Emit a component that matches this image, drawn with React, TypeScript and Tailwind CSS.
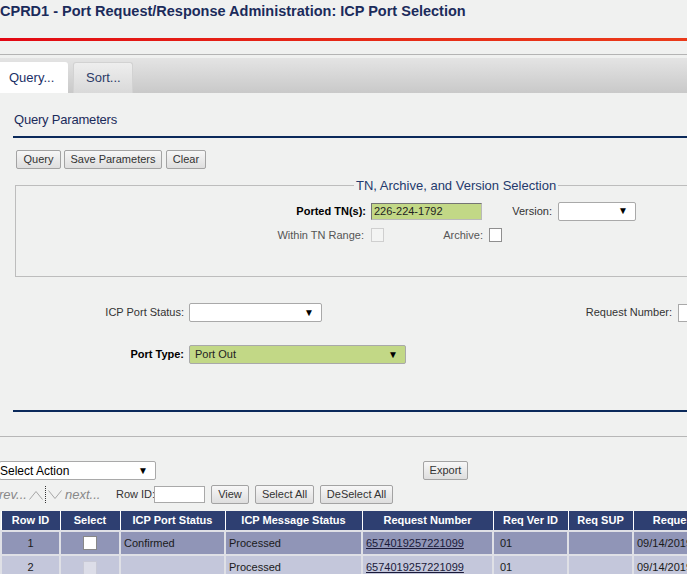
import React from "react";

const Btn = ({ children, className = "" }: { children: React.ReactNode; className?: string }) => (
  <div
    className={
      "h-[19px] flex items-center justify-center rounded-[2px] border border-[#a3a3a3] bg-gradient-to-b from-[#f7f7f7] to-[#dedede] text-[11px] text-[#333] whitespace-nowrap " +
      className
    }
  >
    {children}
  </div>
);

const Select = ({
  value = "",
  className = "",
  pad = "pl-[5px]",
}: {
  value?: string;
  className?: string;
  pad?: string;
}) => (
  <div
    className={
      "h-[19px] flex items-center justify-between rounded-[2px] border border-[#a9a9a9] pr-[7px] text-[#222] " +
      pad +
      " " +
      className
    }
  >
    <span className="whitespace-nowrap">{value}</span>
    <span className="text-[10px] leading-none text-black">▼</span>
  </div>
);

const Chevron = ({ up }: { up?: boolean }) => (
  <svg width="14" height="10" viewBox="0 0 14 10" className="block">
    <polyline
      points={up ? "0.5,9.5 7,1.5 13.5,9.5" : "0.5,0.5 7,8.5 13.5,0.5"}
      fill="none"
      stroke="#a6a6a6"
      strokeWidth="1"
    />
  </svg>
);

const cols = [59, 60, 105, 137, 131, 75, 65, 110];
const headers = [
  "Row ID",
  "Select",
  "ICP Port Status",
  "ICP Message Status",
  "Request Number",
  "Req Ver ID",
  "Req SUP",
  "Request Date",
];

const rows = [
  { id: "1", status: "Confirmed", msg: "Processed", req: "6574019257221099", ver: "01", sup: "", date: "09/14/2019", enabled: true },
  { id: "2", status: "", msg: "Processed", req: "6574019257221099", ver: "01", sup: "", date: "09/14/2019", enabled: false },
];

export default function App() {
  return (
    <div className="w-full h-[574px] overflow-hidden bg-[#f0f1f0] font-['Liberation_Sans',Arial,sans-serif] text-[#333]">
      {/* page title */}
      <div className="h-[38px] pt-[2px] text-[14.5px] font-bold leading-[18px] text-[#1b2b5b] whitespace-nowrap">
        CPRD1 - Port Request/Response Administration: ICP Port Selection
      </div>
      <div className="h-[3px] bg-gradient-to-r from-[#e20613] to-[#ea3a1a]" />
      <div className="mt-[13px] h-px bg-[#b4b4b4]" />

      {/* tabs */}
      <div className="mt-[3px] h-[35px] flex items-end bg-gradient-to-b from-[#e4e4e4] to-[#c9c9c9]">
        <div className="w-[68px] h-[31px] bg-white rounded-tr-[3px] flex items-center pl-[9px] text-[13px] text-[#1a2f66]">
          Query...
        </div>
        <div className="ml-[5px] w-[60px] h-[31px] rounded-t-[3px] border border-b-0 border-[#d2d2d2] bg-gradient-to-b from-[#eeeeee] to-[#d9d9d9] flex items-center pl-[12px] text-[13px] text-[#2b3a66]">
          Sort...
        </div>
      </div>

      {/* query parameters */}
      <div className="mt-[19px] ml-[14px] text-[13px] leading-[16px] tracking-[-0.2px] text-[#1b2b5b]">
        Query Parameters
      </div>
      <div className="mt-[8px] ml-[13px] h-[2px] bg-[#0b2a5b]" />

      <div className="mt-[12px] ml-[16px] flex">
        <Btn className="w-[45px]">Query</Btn>
        <Btn className="w-[98px] ml-[3px]">Save Parameters</Btn>
        <Btn className="w-[40px] ml-[4px]">Clear</Btn>
      </div>

      <fieldset className="mt-[9px] ml-[15px] w-[900px] border border-[#bdbdbd] pb-[34px]">
        <legend className="ml-[338px] px-[2px] text-[13px] leading-[15px] text-[#243a6d]">
          TN, Archive, and Version Selection
        </legend>
        <div className="mt-[8px] h-[20px] flex items-center text-[11px]">
          <div className="w-[350px] text-right font-bold text-black">Ported TN(s):</div>
          <div className="ml-[5px] w-[111px] h-[17px] flex items-center pl-[2px] bg-[#c2d886] border border-[#b9b9b9] border-t-[#747474] border-l-[#747474] text-[#222]">
            226-224-1792
          </div>
          <div className="w-[70px] text-right">Version:</div>
          <Select className="ml-[6px] w-[78px] bg-white text-[11px]" />
        </div>
        <div className="mt-[7px] h-[14px] flex items-center text-[11px]">
          <div className="w-[348px] text-right text-[#555]">Within TN Range:</div>
          <div className="ml-[7px] w-[13px] h-[14px] border border-[#cfcfcf] bg-[#f3f4f3]" />
          <div className="w-[99px] text-right text-[#555]">Archive:</div>
          <div className="ml-[6px] w-[13px] h-[14px] border border-[#8f8f8f] bg-white" />
        </div>
      </fieldset>

      <div className="mt-[26px] h-[19px] flex items-center text-[11px] w-[900px]">
        <div className="w-[184px] text-right">ICP Port Status:</div>
        <Select className="ml-[5px] w-[133px] bg-white" />
        <div className="w-[350px] text-right">Request Number:</div>
        <div className="ml-[6px] w-[60px] h-[18px] border border-[#a9a9a9] bg-white" />
      </div>

      <div className="mt-[23px] h-[19px] flex items-center text-[11px]">
        <div className="w-[184px] text-right font-bold text-black">Port Type:</div>
        <Select value="Port Out" className="ml-[5px] w-[217px] bg-[#c2d886]" />
      </div>

      <div className="mt-[46px] ml-[13px] h-[2px] bg-[#0b2a5b]" />
      <div className="mt-[24px] h-px bg-[#b7b7b7]" />

      {/* results actions */}
      <div className="mt-[24px] flex items-center">
        <Select value="Select Action" pad="pl-0" className="-ml-[1px] w-[157px] bg-white text-[12px] text-black" />
        <Btn className="ml-[267px] w-[45px]">Export</Btn>
      </div>
      <div className="mt-[5px] h-[19px] flex items-center w-[900px]">
        <span className="-ml-[1px] w-[30px] italic text-[13px] text-[#888]">rev...</span>
        <Chevron up />
        <div className="mx-[2px] h-[17px] border-l border-dotted border-[#333]" />
        <Chevron />
        <span className="ml-[3px] w-[51px] italic text-[13px] text-[#888]">next...</span>
        <span className="w-[38px] text-[11px] whitespace-nowrap">Row ID:</span>
        <div className="w-[51px] h-[17px] border border-[#a9a9a9] bg-white" />
        <Btn className="ml-[6px] w-[38px]">View</Btn>
        <Btn className="ml-[6px] w-[59px]">Select All</Btn>
        <Btn className="ml-[6px] w-[73px]">DeSelect All</Btn>
      </div>

      <table className="mt-[7px] table-fixed border-collapse text-[11px]" style={{ width: cols.reduce((a, b) => a + b, 0) }}>
        <colgroup>
          {cols.map((w, i) => (
            <col key={i} style={{ width: w }} />
          ))}
        </colgroup>
        <thead>
          <tr className="h-[20px] bg-[#2e3f71]">
            {headers.map((h) => (
              <th key={h} className="border-x border-white font-bold text-white text-center whitespace-nowrap px-[2px]">
                {h}
              </th>
            ))}
          </tr>
        </thead>
        <tbody>
          {rows.map((r) => (
            <tr
              key={r.id}
              className={
                "h-[24px] border-t-2 border-[#dfe0e6] text-[#1a1a1a] " +
                (r.enabled ? "bg-[#9095b7]" : "bg-[#c4c7db]")
              }
            >
              <td className="border-x-2 border-[#dfe0e6] text-center">{r.id}</td>
              <td className="border-x-2 border-[#dfe0e6]">
                <div
                  className={
                    "mx-auto w-[14px] h-[14px] border " +
                    (r.enabled ? "bg-white border-[#888]" : "bg-[#dcdde8] border-[#c8c9d6]")
                  }
                />
              </td>
              <td className="border-x-2 border-[#dfe0e6] pl-[3px]">{r.status}</td>
              <td className="border-x-2 border-[#dfe0e6] pl-[3px]">{r.msg}</td>
              <td className="border-x-2 border-[#dfe0e6] pl-[3px]">
                <span className="underline text-[#1a1a3a]">{r.req}</span>
              </td>
              <td className="border-x-2 border-[#dfe0e6] pl-[6px]">{r.ver}</td>
              <td className="border-x-2 border-[#dfe0e6] pl-[3px]">{r.sup}</td>
              <td className="border-x-2 border-[#dfe0e6] pl-[3px] whitespace-nowrap">{r.date}</td>
            </tr>
          ))}
        </tbody>
      </table>
    </div>
  );
}
